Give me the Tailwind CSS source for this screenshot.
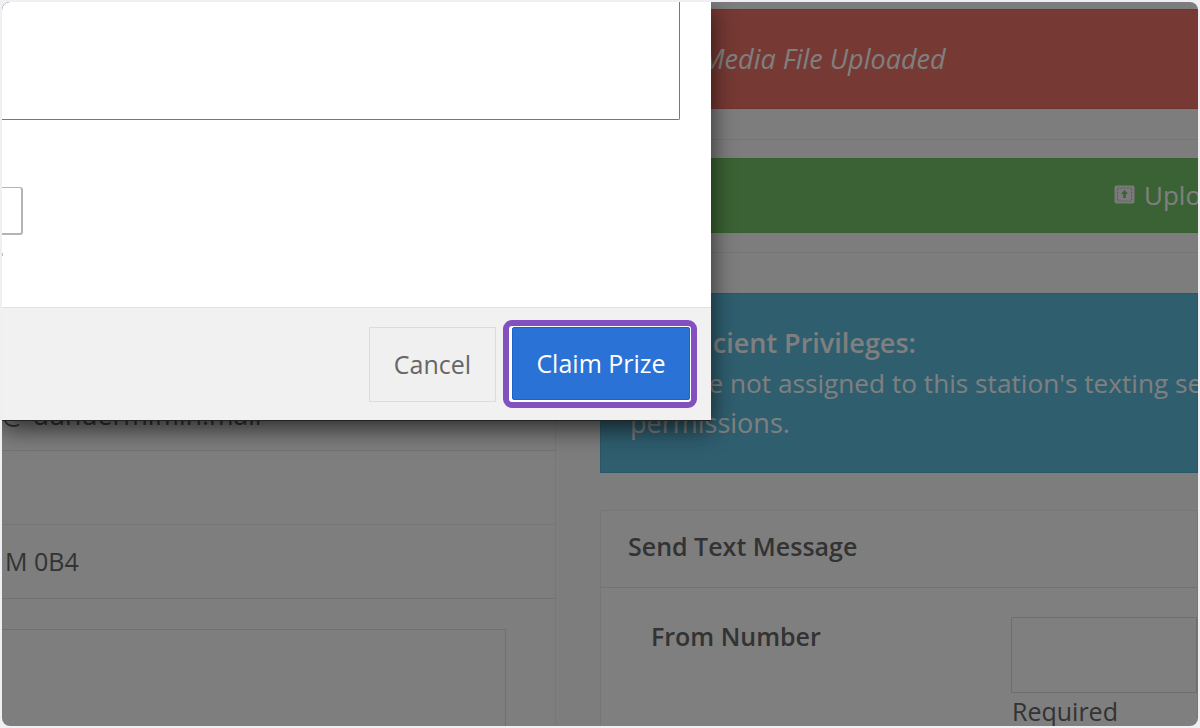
<!doctype html>
<html>
<head>
<meta charset="utf-8">
<script src="https://cdn.jsdelivr.net/npm/@tailwindcss/browser@4"></script>
</head>
<body class="w-[1200px] h-[728px] overflow-hidden bg-[#f0f0f4] font-['Open_Sans',sans-serif]">
<div class="relative m-[2px] w-[1196px] h-[724px] overflow-hidden rounded-lg bg-[#fcfcfc]">
  <!-- page behind the modal -->
  <div class="flex h-full w-full text-[#666]">
    <!-- left column -->
    <div class="w-[554px] shrink-0 border-r border-[#eeeeee] flex flex-col pt-[391px]">
      <div class="h-[58px] shrink-0 border-b border-[#e6e6e6] pt-[5px] text-[26.5px] leading-[34px] whitespace-nowrap overflow-hidden">@ dundermifflin.mail</div>
      <div class="h-[74px] shrink-0 border-b border-[#ececec]"></div>
      <div class="h-[74px] shrink-0 border-b border-[#e4e4e4] flex items-center pl-[3px] text-[25px]">M 0B4</div>
      <div class="mt-[30px] mr-[49px] h-[140px] shrink-0 border border-l-0 border-[#dedede]"></div>
    </div>
    <!-- right column -->
    <div class="flex-1 pl-[44px] pt-[7px] flex flex-col min-w-0 bg-[#fafafa]">
      <div class="h-[100px] shrink-0 border-y border-[#dd6a5c] bg-[#ec7366] flex items-center pl-[102px] text-white italic text-[27px] whitespace-nowrap">Media File Uploaded</div>
      <div class="h-[31px] shrink-0 border-b border-[#ececec]"></div>
      <div class="mt-[18px] h-[75px] shrink-0 bg-[#76c568] border-y border-[#70bf62] flex items-center pl-[514px] text-white text-[26px] whitespace-nowrap">
        <svg class="w-[21px] h-[19px] mr-[9px] -mt-[3px] shrink-0" viewBox="0 0 21 19"><rect x="0.5" y="0.5" width="20" height="18" rx="2" fill="#f4f4f4"/><rect x="3.5" y="3" width="14" height="13" fill="none" stroke="#bdbdbd" stroke-dasharray="2 1"/><path d="M10.5 5l3.5 4h-2.2v4h-2.6V9H7z" fill="#76c568"/></svg>
        <span>Upload</span>
      </div>
      <div class="h-[20px] shrink-0 border-b border-[#ececec]"></div>
      <div class="mt-[40px] h-[180px] shrink-0 bg-[#5ebcde] border border-[#52b0d2] pl-[29px] pt-[29px] text-white leading-[40px] whitespace-nowrap">
        <div class="font-semibold text-[27px]">Insufficient Privileges:</div>
        <div class="text-[26.2px]">You are not assigned to this station's texting service and</div>
        <div class="text-[27px]">permissions.</div>
      </div>
      <div class="mt-[37px] flex-1 border border-[#ececec] bg-white">
        <div class="h-[77px] border-b border-[#e4e4e4] bg-[#fdfdfd] flex items-center pl-[27px] pb-[4px] text-[25px] font-semibold whitespace-nowrap">Send Text Message</div>
        <div class="flex pt-[29px] pl-[50px]">
          <div class="w-[360px] shrink-0 -mt-[1px] text-[25px] font-semibold leading-[40px]">From Number</div>
          <div class="flex-1">
            <div class="h-[76px] border border-[#dcdcdc]"></div>
            <div class="text-[25px] leading-[36px] pl-[1px]">Required</div>
          </div>
        </div>
      </div>
    </div>
  </div>

  <!-- overlay -->
  <div class="absolute inset-0 bg-black/50"></div>

  <!-- modal -->
  <div class="absolute left-0 top-0 w-[709px] h-[419px] flex flex-col bg-white border-b border-[#222] shadow-[0_8px_24px_#000000a6] rounded-tl-lg">
    <div class="relative flex-1">
      <div class="absolute left-0 top-0 w-[678px] h-[118px] border-r border-b border-[#777] rounded-br-[2px]"></div>
      <div class="absolute left-0 top-[185px] w-[21px] h-[48px] border-2 border-l-0 border-t border-[#b4b4b4] rounded-r-[3px]"></div>
      <div class="absolute left-0 top-[251px] w-px h-[3px] bg-[#bbb]"></div>
    </div>
    <div class="h-[113px] shrink-0 bg-[#f1f1f1] border-t border-[#e2e2e2] flex items-start justify-end pt-[19px] pr-[14px]">
      <button class="w-[127px] h-[75px] border border-[#dcdcdc] bg-[#f0f0f0] text-[#666] text-[25px]">Cancel</button>
      <div class="ml-[7px] w-[194px] h-[88px] -mt-[7px] rounded-[9px] border-[6px] border-[#8250bf] bg-white flex items-stretch pl-[3px] pr-[1px] pb-[2px] pt-[1px]">
        <button class="w-full bg-[#2a72d5] border border-[#1b63c6] rounded-[2px] text-white text-[25px]">Claim Prize</button>
      </div>
    </div>
  </div>
</div>
</body>
</html>
